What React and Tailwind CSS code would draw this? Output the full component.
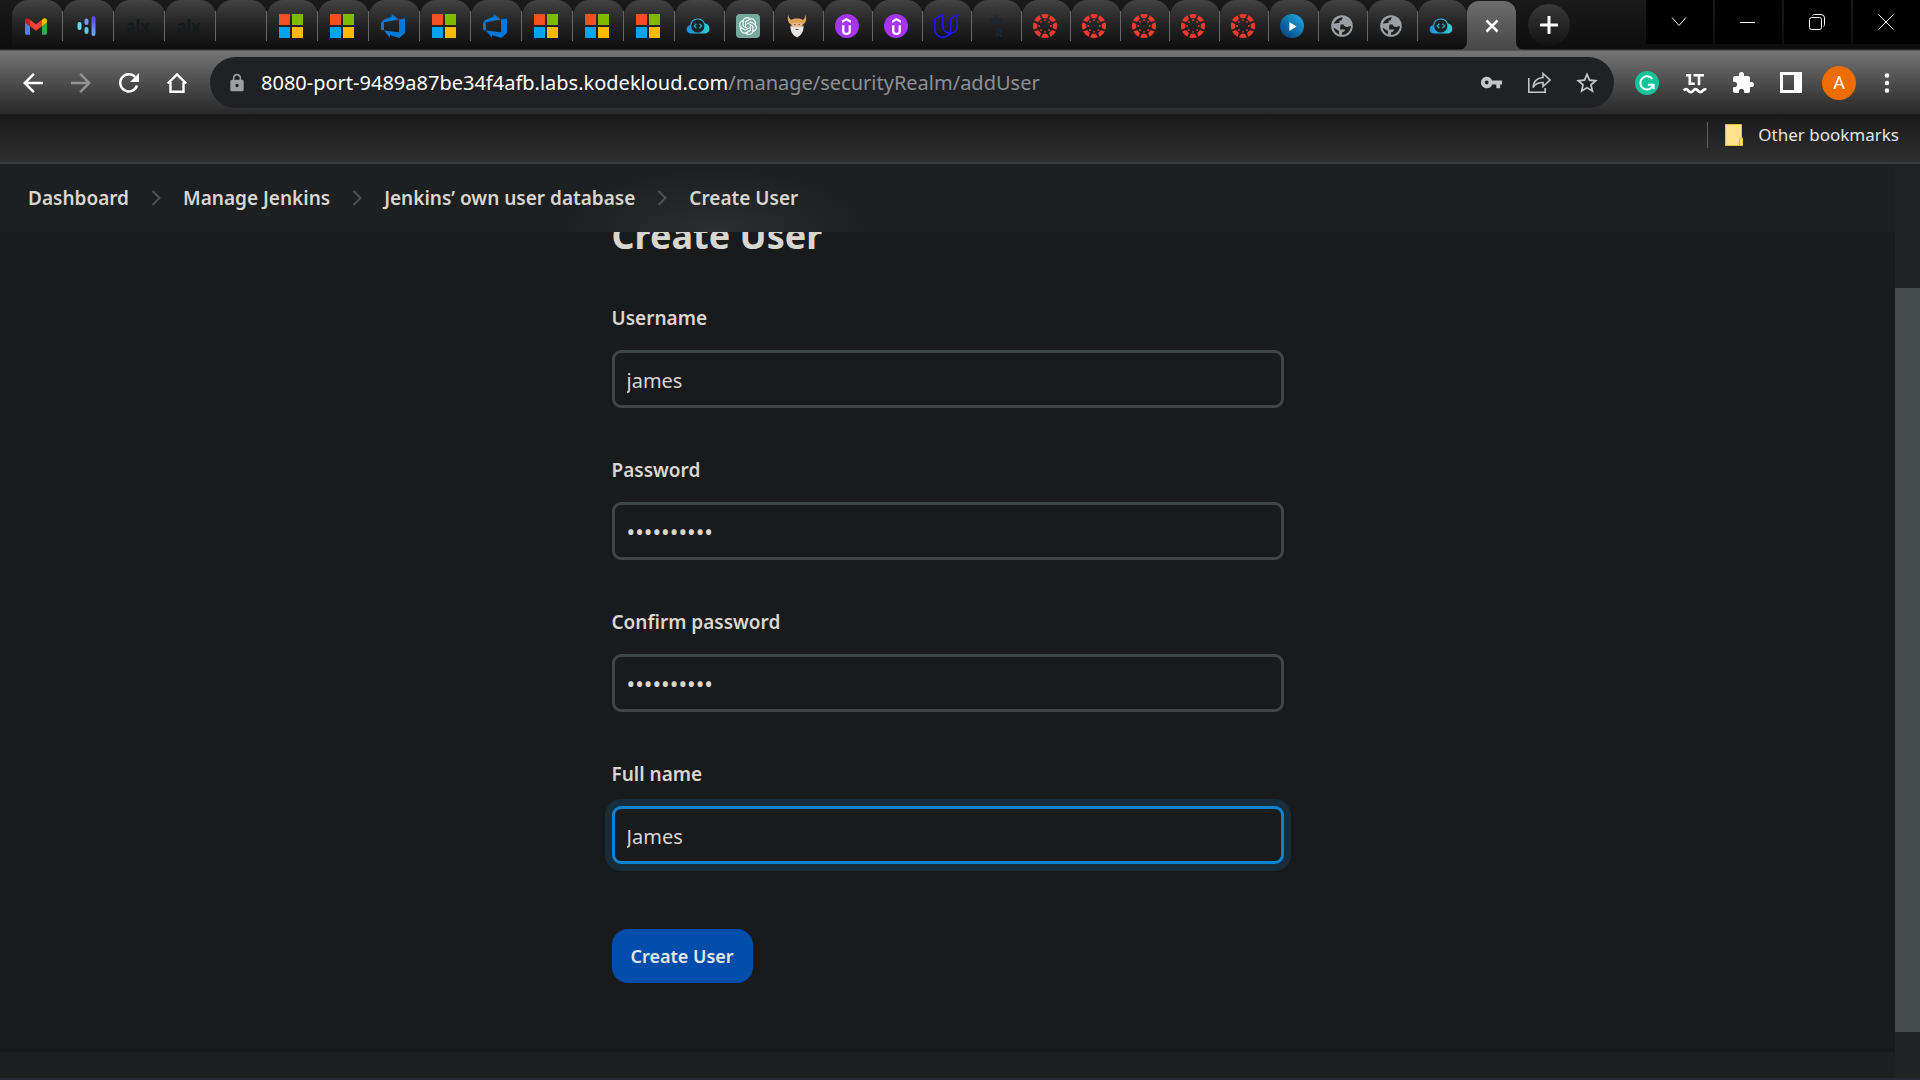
import React from "react";
import { MdArrowBack, MdArrowForward, MdExtension, MdLock, MdVpnKey, MdStarBorder } from "react-icons/md";
import { SiOpenai, SiUdemy, SiUdacity } from "react-icons/si";

const Gmail = () => (
  <svg viewBox="52 42 88 66" className="h-[17px] w-[22px]">
    <path fill="#4285f4" d="M58 108h14V74L52 59v43c0 3.32 2.69 6 6 6" />
    <path fill="#34a853" d="M120 108h14c3.32 0 6-2.69 6-6V59l-20 15" />
    <path fill="#fbbc04" d="M120 48v26l20-15v-8c0-7.42-8.47-11.65-14.4-7.2" />
    <path fill="#ea4335" d="M72 74V48l24 18 24-18v26L96 92" />
    <path fill="#c5221f" d="M52 51v8l20 15V48l-5.6-4.2c-5.94-4.45-14.4-.22-14.4 7.2" />
  </svg>
);

const Bars = () => (
  <svg viewBox="0 0 24 24" className="size-6" strokeLinecap="round">
    <defs>
      <linearGradient id="barA" x1="0" y1="0" x2="0" y2="1">
        <stop offset="0" stopColor="#5b3fe0" />
        <stop offset="1" stopColor="#6bb0f5" />
      </linearGradient>
    </defs>
    <rect x="2.5" y="8" width="4" height="8" rx="2" fill="#62dbe8" />
    <rect x="9.5" y="4.5" width="4" height="6.5" rx="2" fill="#7396f0" />
    <rect x="9.5" y="13" width="4" height="7" rx="2" fill="#5cc9ee" />
    <rect x="16.5" y="2" width="4" height="20" rx="2" fill="url(#barA)" />
  </svg>
);

const Alx = () => <span className="font-['Lato',sans-serif] text-lg leading-5 font-black text-[#131c1a]">alx</span>;

const AlxR = () => (
  <span className="flex flex-col items-end font-['Lato',sans-serif] text-[11px] leading-[13px] font-black text-[#1a2638]">
    <span>alx</span>
    <span>R</span>
  </span>
);

const Microsoft = () => (
  <svg viewBox="0 0 24 24" className="size-6">
    <path fill="#f25022" d="M0 0h11v11H0z" />
    <path fill="#7fba00" d="M13 0h11v11H13z" />
    <path fill="#00a4ef" d="M0 13h11v11H0z" />
    <path fill="#ffb900" d="M13 13h11v11H13z" />
  </svg>
);

const Azure = () => (
  <svg viewBox="0 0 24 24" className="size-6">
    <path
      fill="#0078d7"
      d="M0 8.877L2.247 5.91l8.405-3.416V.022l7.37 5.393L2.966 8.338v8.225L0 15.707zm24-4.45v14.651l-5.753 4.9-9.303-3.057v3.056l-5.978-7.416 15.057 1.798V5.415z"
    />
  </svg>
);

const KodeKloud = () => (
  <svg viewBox="0 0 24 24" className="size-6">
    <defs>
      <linearGradient id="kk" x1="0" y1="0" x2="1" y2="0">
        <stop offset="0" stopColor="#1f8fe0" />
        <stop offset="1" stopColor="#2ad0cf" />
      </linearGradient>
    </defs>
    <path fill="url(#kk)" d="M4.5 19.500a4.200 4.200 0 0 1-.5-8.300 7.800 7.800 0 0 1 15-1.700 5.100 5.100 0 0 1 .5 10z" />
    <circle cx="11.800" cy="12" r="6.600" fill="#1b2325" />
    <path d="M10.400 9.800L8.200 12l2.200 2.200M13.400 9.800l2.200 2.200-2.200 2.200" fill="none" stroke="#27a7b8" strokeWidth="1.300" />
  </svg>
);

const ChatGpt = () => (
  <span className="flex size-6 items-center justify-center rounded-sm bg-[#75a99c]">
    <SiOpenai className="size-[18px] text-white" />
  </span>
);

const Viking = () => (
  <svg viewBox="0 0 24 24" className="size-6">
    <path fill="#dca45a" d="M3.500.5c.2 3 1 4.800 3.200 5.300C8 4 16 4 17.300 5.800c2.200-.5 3-2.300 3.200-5.300 1.600 4.500.4 8.500-2.500 10H6C3.100 9 1.900 5 3.500.5z" />
    <path fill="#e9b98d" d="M6.500 9h11v6h-11z" />
    <path fill="#e8e6e2" d="M5.500 11.500c2 2.500 4.500 1 6.500 1.500 2-.5 4.500 1 6.500-1.500.5 5-2 10-6.500 12-4.500-2-7-7-6.500-12z" />
    <path d="M9 10.500h1.500M13.500 10.500H15M10.500 15.500h3" stroke="#7a5a44" strokeWidth="1.200" />
  </svg>
);

const Udemy = () => (
  <span className="flex size-6 items-center justify-center rounded-full bg-[#a435f0]">
    <SiUdemy className="size-[17px] text-white" />
  </span>
);

const Udacity = () => <SiUdacity className="size-6 text-[#2015ff]" />;

const rays = [0, 45, 90, 135, 180, 225, 270, 315];
const Canvas = () => (
  <svg viewBox="0 0 24 24" className="size-6" fill="#f03a2e">
    <clipPath id="canvasDisc">
      <circle cx="12" cy="12" r="12" />
    </clipPath>
    <g clipPath="url(#canvasDisc)">
      {rays.map((a) => (
        <path key={a} d="M8.200-1h7.600v1.800L14 4.200h-4L8.200.8z" transform={`rotate(${a} 12 12)`} />
      ))}
    </g>
    {rays.map((a) => (
      <circle key={a} cx="12" cy="6.200" r="0.900" transform={`rotate(${a} 12 12)`} />
    ))}
  </svg>
);

const Play = () => (
  <span className="flex size-6 items-center justify-center rounded-full bg-linear-to-tr from-[#063a78] to-[#23b0e6]">
    <svg viewBox="0 0 10 10" className="size-[9px] text-white">
      <path fill="currentColor" d="M1.500 0l8 5-8 5z" />
    </svg>
  </span>
);

const Globe = () => (
  <svg viewBox="0 0 24 24" className="size-6">
    <circle cx="12" cy="12" r="10.800" fill="#9aa0a6" />
    <g fill="#202020">
      <path d="M3.800 9.500C5.500 5.800 9 3.500 13 3.200c-.5 1.500-1.500 2-1.500 3.300h-2V9c-2.500 0-3.500.5-5.700.5z" />
      <path d="M10.500 10.500h3c1 1.800 2 2.500 3.500 2.500 1.500 0 2.500-1 4-1-.2 4.500-4 9-9 9v-2.500c1.500-.5 3-1 3-3h-5z" />
      <path d="M3.500 13.500c.5 3 2.500 5.800 5.500 7V17z" />
    </g>
  </svg>
);

const Empty = () => <span className="size-6" />;

const wideTabs = [
  [Gmail, "Gmail"], [Bars, "Meetings"], [Alx, "Course"], [Alx, "Course notes"], [Empty, "Blank"],
  [Microsoft, "Docs"], [Microsoft, "Docs 2"], [Azure, "Boards"], [Microsoft, "Docs 3"], [Azure, "Boards 2"],
  [Microsoft, "Docs 4"], [Microsoft, "Docs 5"], [Microsoft, "Docs 6"],
];
const narrowTabs = [
  [KodeKloud, "KodeKloud"], [ChatGpt, "Chat"], [Viking, "Viking"], [Udemy, "Udemy"], [Udemy, "Udemy 2"],
  [Udacity, "Udacity"], [AlxR, "Course R"], [Canvas, "Canvas"], [Canvas, "Canvas 2"], [Canvas, "Canvas 3"],
  [Canvas, "Canvas 4"], [Canvas, "Canvas 5"], [Play, "Player"], [Globe, "Site"], [Globe, "Site 2"],
  [KodeKloud, "Lab"],
];

function Tab({ icon: Icon, label, last }) {
  return (
    <button
      type="button"
      aria-label={label}
      className="flex h-[49px] min-w-0 flex-1 items-start rounded-t-2xl bg-linear-to-b from-[#434343] via-[#232323] to-[#0e0e0e] pt-[11px]"
    >
      <span
        className={
          last
            ? "flex h-[30px] w-full items-center justify-center pr-0.5"
            : "flex h-[30px] w-full items-center justify-center border-r border-[#666] pr-0.5"
        }
      >
        <Icon />
      </span>
    </button>
  );
}

function TabStrip() {
  return (
    <div className="flex h-[50px] items-start border-b border-[#2e2e2e] bg-linear-to-b from-[#1a1a1a] to-[#0d0d0d] pl-3">
      <div className="flex w-[663px]">
        {wideTabs.map(([icon, label]) => (
          <Tab key={label} icon={icon} label={label} />
        ))}
      </div>
      <div className="flex w-[792px]">
        {narrowTabs.map(([icon, label]) => (
          <Tab key={label} icon={icon} label={label} last={label === "Lab"} />
        ))}
      </div>
      <button
        type="button"
        aria-label="Close tab"
        className="relative mt-px flex h-[49px] w-[49px] items-center justify-center rounded-t-xl bg-linear-to-b from-[#6d6d6d] to-[#474747]"
      >
        <svg viewBox="0 0 14 14" className="size-3.5">
          <path d="M1.500 1.500l11 11M12.500 1.500l-11 11" stroke="#fff" strokeWidth="2.500" />
        </svg>
        <svg viewBox="0 0 8 8" className="absolute bottom-0 -left-2 size-2">
          <path d="M8 0v8H0a8 8 0 0 0 8-8z" fill="#484848" />
        </svg>
        <svg viewBox="0 0 8 8" className="absolute -right-2 bottom-0 size-2">
          <path d="M0 0v8h8a8 8 0 0 1-8-8z" fill="#484848" />
        </svg>
      </button>
      <button
        type="button"
        aria-label="New tab"
        className="mt-1 ml-3 flex size-[42px] items-center justify-center rounded-full bg-linear-to-b from-[#3a3a3a] to-[#121212]"
      >
        <svg viewBox="0 0 18 18" className="size-[18px]">
          <path d="M9 1v16M1 9h16" stroke="#fff" strokeWidth="3" strokeLinecap="round" />
        </svg>
      </button>
      <div className="ml-auto flex gap-0.5 text-white">
        <button type="button" aria-label="Search tabs" className="flex h-11 w-[67px] items-center justify-center bg-black pr-0.5">
          <svg viewBox="0 0 16 16" className="size-4" fill="none" stroke="currentColor">
            <path d="M1 3.500l7 8 7-8" />
          </svg>
        </button>
        <button type="button" aria-label="Minimize" className="flex h-11 w-[67px] items-center justify-center bg-black pr-0.5">
          <span className="h-px w-[15px] bg-white" />
        </button>
        <button type="button" aria-label="Restore" className="flex h-11 w-[67px] items-center justify-center bg-black pr-0.5">
          <svg viewBox="0 0 16 16" className="size-4" fill="none" stroke="currentColor">
            <rect x="0.500" y="3.500" width="12" height="12" rx="2" />
            <path d="M3.500 1.500C4 .8 4.500.5 5.500.5H12A3.500 3.500 0 0 1 15.500 4v6.500c0 1-.3 1.500-1 2" />
          </svg>
        </button>
        <button type="button" aria-label="Close" className="flex h-11 w-[67px] items-center justify-center bg-black pr-0.5">
          <svg viewBox="0 0 16 16" className="size-4" fill="none" stroke="currentColor">
            <path d="M.5.5l15 15M15.500.5l-15 15" />
          </svg>
        </button>
      </div>
    </div>
  );
}

function IconButton({ label, children }) {
  return (
    <button type="button" aria-label={label} className="flex size-6 items-center justify-center">
      {children}
    </button>
  );
}

function Toolbar() {
  return (
    <div className="flex h-16 items-center border-t border-[#555] bg-linear-to-b from-[#757575] to-[#282828] pr-[21px] pl-[21px] text-white">
      <div className="flex gap-6">
        <IconButton label="Back">
          <MdArrowBack className="size-[30px] shrink-0" />
        </IconButton>
        <IconButton label="Forward">
          <MdArrowForward className="size-[30px] shrink-0 text-[#939393]" />
        </IconButton>
        <IconButton label="Reload">
          <svg viewBox="0 0 24 24" className="size-6" fill="none" stroke="currentColor" strokeWidth="2.400">
            <path d="M20 14.500A8.600 8.600 0 1 1 18.200 6" />
            <path d="M22 2v9h-9z" fill="currentColor" stroke="none" />
          </svg>
        </IconButton>
        <IconButton label="Home">
          <svg viewBox="0 0 24 24" className="size-6" fill="none" stroke="currentColor" strokeWidth="2.400">
            <path d="M2.800 12.500L12 3.500l9.200 9M5.500 11v9.800h13V11" />
          </svg>
        </IconButton>
      </div>
      <div className="ml-[21px] flex h-[51px] min-w-0 flex-1 items-center rounded-full bg-[#202124] pr-[15px] pl-[17px]">
        <MdLock className="size-5 shrink-0 text-[#9aa0a6]" />
        <div
          role="textbox"
          aria-label="Address"
          contentEditable
          suppressContentEditableWarning
          spellCheck={false}
          className="ml-3.5 min-w-0 flex-1 truncate text-xl leading-7 outline-none"
        >
          8080-port-9489a87be34f4afb.labs.kodekloud.com
          <span className="text-[#8d9094]">/manage/securityRealm/addUser</span>
        </div>
        <div className="flex gap-6 text-[#c4c5c7]">
          <IconButton label="Passwords">
            <MdVpnKey className="size-[23px]" />
          </IconButton>
          <IconButton label="Share">
            <svg viewBox="0 0 24 24" className="size-6" fill="none" stroke="currentColor" strokeWidth="1.600">
              <path d="M1.800 7v14.200h16.400V17" />
              <path d="M16 2.500l7 6.500-7 6.500v-4c-5 0-8 1.500-10 5 .5-6 4-9.500 10-10z" />
            </svg>
          </IconButton>
          <IconButton label="Bookmark">
            <MdStarBorder className="size-[26px] shrink-0" />
          </IconButton>
        </div>
      </div>
      <div className="ml-[21px] flex items-center gap-6">
        <IconButton label="Grammarly">
          <svg viewBox="0 0 24 24" className="size-6">
            <circle cx="12" cy="12" r="12" fill="#15c39a" />
            <path d="M17.300 8A6.600 6.600 0 1 0 17 16.200l1-2.200M13 13.800h5.500v4.500" fill="none" stroke="#fff" strokeWidth="2" />
          </svg>
        </IconButton>
        <IconButton label="LanguageTool">
          <svg viewBox="0 0 24 24" className="size-6" fill="none" stroke="currentColor" strokeWidth="2.600">
            <path d="M3 4.300h3.800v8.500h5M10.500 4.300H21M16 4.300v10" />
            <path d="M.8 19.600c1.500-2 3-2 4.500 0s3.500 2 5 0 3-2 4.500 0 3.500 2 5 0 2.500-1.500 3.500-.8" />
          </svg>
        </IconButton>
        <IconButton label="Extensions">
          <MdExtension className="size-6" />
        </IconButton>
        <IconButton label="Side panel">
          <svg viewBox="0 0 22 21" className="h-[21px] w-[22px]">
            <path fill="currentColor" fillRule="evenodd" d="M0 0h22v21H0zM3 3v15h11V3z" />
          </svg>
        </IconButton>
        <button type="button" aria-label="Profile" className="-mx-[5px] flex size-[34px] items-center justify-center rounded-full bg-[#ef6c00] font-['Roboto',sans-serif] text-lg leading-none">
          A
        </button>
        <IconButton label="Menu">
          <svg viewBox="0 0 24 24" className="size-6" fill="currentColor">
            <circle cx="12" cy="4.500" r="2.300" />
            <circle cx="12" cy="12" r="2.300" />
            <circle cx="12" cy="19.500" r="2.300" />
          </svg>
        </IconButton>
      </div>
    </div>
  );
}

function Bookmarks() {
  return (
    <div className="flex h-[50px] items-start justify-end border-b-2 border-[#3b3b3b] bg-linear-to-b from-[#1a1a1a] to-[#302f2f] pt-2 pr-[21px]">
      <button type="button" className="flex h-[26px] items-center border-l border-[#5f5f5f] pl-[17px] text-[#e4e5e7]">
        <svg viewBox="0 0 18 22" className="h-[22px] w-[18px]">
          <path d="M.5.5h16V14h1v7.500H.5z" fill="#fee38b" stroke="#e8c341" />
          <path d="M14.500 21.500V16c0-1.500 2-1.500 2-2" fill="none" stroke="#d3ac2a" />
        </svg>
        <span className="ml-[15px] text-[17px] leading-6">Other bookmarks</span>
      </button>
    </div>
  );
}

const crumbs = ["Dashboard", "Manage Jenkins", "Jenkins’ own user database", "Create User"];

function Breadcrumbs() {
  return (
    <nav
      aria-label="Breadcrumb"
      className="z-10 flex h-[68px] shrink-0 items-center gap-[22px] bg-[#1c2021] bg-[radial-gradient(150px_64px_at_715px_100%,#2c2e2f,#1c2021)] px-7 text-[19px] font-semibold"
    >
      {crumbs.map((c, i) => (
        <React.Fragment key={c}>
          {i > 0 && (
            <svg viewBox="0 0 10 16" className="h-4 w-2.5" fill="none" stroke="#4c5254" strokeWidth="2">
              <path d="M1.500 1l7 7-7 7" />
            </svg>
          )}
          <a href="#">{c}</a>
        </React.Fragment>
      ))}
    </nav>
  );
}

const fields = [
  { id: "username", label: "Username", type: "text", value: "james" },
  { id: "password", label: "Password", type: "password", value: "kodekloud1" },
  { id: "confirm", label: "Confirm password", type: "password", value: "kodekloud1" },
  { id: "fullname", label: "Full name", type: "text", value: "James", active: true },
];

function Field({ id, label, type, value, active }) {
  const size = type === "password" ? "text-[23px]" : "text-xl";
  const frame = active ? "border-[#0c84d1] ring-7 ring-[#0c84d1]/18" : "border-[#3f4647]";
  return (
    <div className="flex flex-col">
      <label htmlFor={id} className="mb-[18px] self-start text-[19px] leading-7 font-semibold">
        {label}
      </label>
      <input
        id={id}
        type={type}
        defaultValue={value}
        autoComplete="off"
        className={`h-[58px] rounded-[9px] border-3 bg-[#181a1b] px-3 pt-0.5 outline-none ${size} ${frame}`}
      />
    </div>
  );
}

export default function App() {
  return (
    <div className="flex h-screen flex-col overflow-hidden bg-[#191a1c] font-['Noto_Sans','Open_Sans',sans-serif]">
      <header>
        <TabStrip />
        <Toolbar />
        <Bookmarks />
      </header>
      <div className="flex min-h-0 flex-1">
        <main className="flex min-w-0 flex-1 flex-col text-[#d9d6d0]">
          <Breadcrumbs />
          <div className="min-h-0 flex-1 overflow-hidden">
            <form className="mx-auto max-w-[672px]" onSubmit={(e) => e.preventDefault()}>
              <h1 className="-mt-[22px] mb-[42px] text-4xl leading-[52px] font-bold">Create User</h1>
              <div className="flex flex-col gap-12">
                {fields.map((f) => (
                  <Field key={f.id} {...f} />
                ))}
              </div>
              <button type="submit" className="mt-[65px] h-[54px] rounded-2xl bg-[#004dab] px-[19px] text-lg font-semibold text-[#e8e6e3]">
                Create User
              </button>
            </form>
          </div>
          <footer className="h-7 shrink-0 border-b-2 border-[#26292f] bg-[#1c2021]" />
        </main>
        <div className="w-[25px] border-b-2 border-[#26292f] bg-[#202324] pt-[124px] pb-[46px]">
          <div className="h-full bg-[#454a4b]" />
        </div>
      </div>
    </div>
  );
}
